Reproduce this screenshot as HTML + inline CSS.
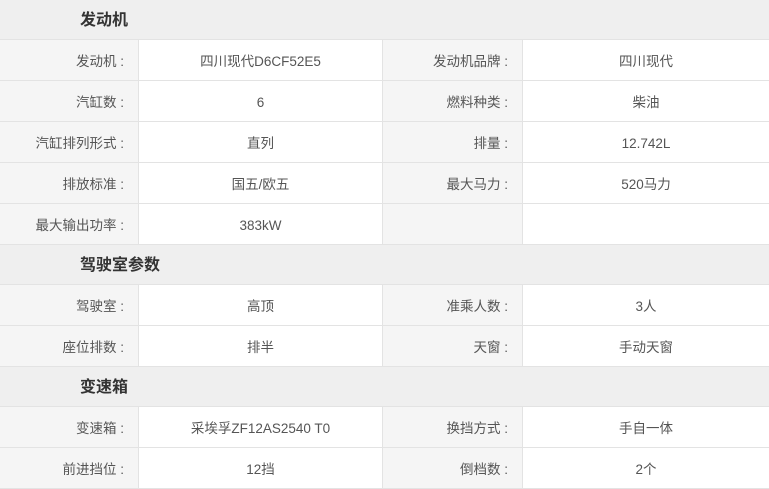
<html><head><style>
body{margin:0;background:#fff;font-family:"Liberation Sans","Noto Sans CJK SC",sans-serif;font-size:13.5px;color:#555;width:769px;height:486px;overflow:hidden}
.h{height:39px;border-bottom:1px solid #e3e3e3;background:#efefef;font-weight:bold;font-size:16px;color:#333;line-height:41px;padding-left:80px;box-sizing:content-box;overflow:hidden}
.r{display:flex;height:40px;border-bottom:1px solid #e3e3e3;line-height:43px}
.r div{box-sizing:border-box;height:40px;overflow:hidden}
.l{background:#f5f5f5;text-align:right;padding-right:14px;border-right:1px solid #e3e3e3}
.v{text-align:center;border-right:1px solid #e3e3e3}
.a{width:139px}.b{width:244px}.c{width:140px}.d{width:246px;border-right:none!important}
</style></head><body>
<div class="h">发动机</div>
<div class="r"><div class="l a">发动机 :</div><div class="v b">四川现代D6CF52E5</div><div class="l c">发动机品牌 :</div><div class="v d">四川现代</div></div>
<div class="r"><div class="l a">汽缸数 :</div><div class="v b">6</div><div class="l c">燃料种类 :</div><div class="v d">柴油</div></div>
<div class="r"><div class="l a">汽缸排列形式 :</div><div class="v b">直列</div><div class="l c">排量 :</div><div class="v d">12.742L</div></div>
<div class="r"><div class="l a">排放标准 :</div><div class="v b">国五/欧五</div><div class="l c">最大马力 :</div><div class="v d">520马力</div></div>
<div class="r"><div class="l a">最大输出功率 :</div><div class="v b">383kW</div><div class="l c"></div><div class="v d"></div></div>
<div class="h">驾驶室参数</div>
<div class="r"><div class="l a">驾驶室 :</div><div class="v b">高顶</div><div class="l c">准乘人数 :</div><div class="v d">3人</div></div>
<div class="r"><div class="l a">座位排数 :</div><div class="v b">排半</div><div class="l c">天窗 :</div><div class="v d">手动天窗</div></div>
<div class="h">变速箱</div>
<div class="r"><div class="l a">变速箱 :</div><div class="v b">采埃孚ZF12AS2540 T0</div><div class="l c">换挡方式 :</div><div class="v d">手自一体</div></div>
<div class="r"><div class="l a">前进挡位 :</div><div class="v b">12挡</div><div class="l c">倒档数 :</div><div class="v d">2个</div></div>
</body></html>
